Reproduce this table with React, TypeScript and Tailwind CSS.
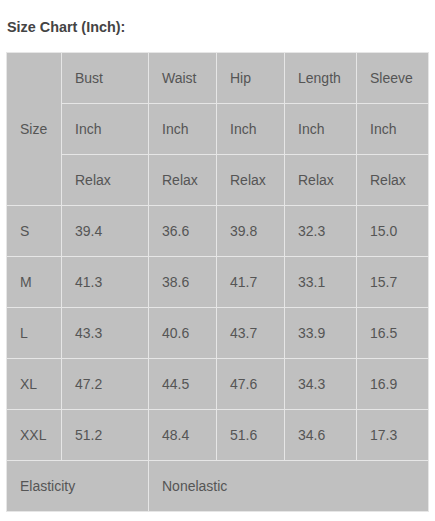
import React from "react";

const cell = "border border-[#e6e6e6] px-[13px] text-left align-middle font-normal h-[51px]";

export default function App() {
  const rows = [
    ["S", "39.4", "36.6", "39.8", "32.3", "15.0"],
    ["M", "41.3", "38.6", "41.7", "33.1", "15.7"],
    ["L", "43.3", "40.6", "43.7", "33.9", "16.5"],
    ["XL", "47.2", "44.5", "47.6", "34.3", "16.9"],
    ["XXL", "51.2", "48.4", "51.6", "34.6", "17.3"],
  ];
  const heads = ["Bust", "Waist", "Hip", "Length", "Sleeve"];
  return (
    <div className="bg-white w-[435px] h-[521px] overflow-hidden text-[14px] text-[#555555]" style={{ fontFamily: '"Liberation Sans", Arial, sans-serif' }}>
      <div className="pl-[7px] pt-[17px] h-[52px] text-[14.4px] font-bold text-[#444444]">Size Chart (Inch):</div>
      <table className="ml-[6px] w-[422px] border-collapse bg-[#c0c0c0] table-fixed">
        <colgroup>
          <col className="w-[55px]" />
          <col className="w-[87px]" />
          <col className="w-[68px]" />
          <col className="w-[68px]" />
          <col className="w-[72px]" />
          <col className="w-[72px]" />
        </colgroup>
        <tbody>
          <tr>
            <td rowSpan={3} className={cell}>Size</td>
            {heads.map((h) => (
              <td key={h} className={cell}>{h}</td>
            ))}
          </tr>
          <tr>
            {heads.map((h) => (
              <td key={h} className={cell}>Inch</td>
            ))}
          </tr>
          <tr>
            {heads.map((h) => (
              <td key={h} className={cell}>Relax</td>
            ))}
          </tr>
          {rows.map((r) => (
            <tr key={r[0]}>
              {r.map((v, i) => (
                <td key={i} className={cell}>{v}</td>
              ))}
            </tr>
          ))}
          <tr>
            <td colSpan={2} className={cell}>Elasticity</td>
            <td colSpan={4} className={cell}>Nonelastic</td>
          </tr>
        </tbody>
      </table>
    </div>
  );
}
